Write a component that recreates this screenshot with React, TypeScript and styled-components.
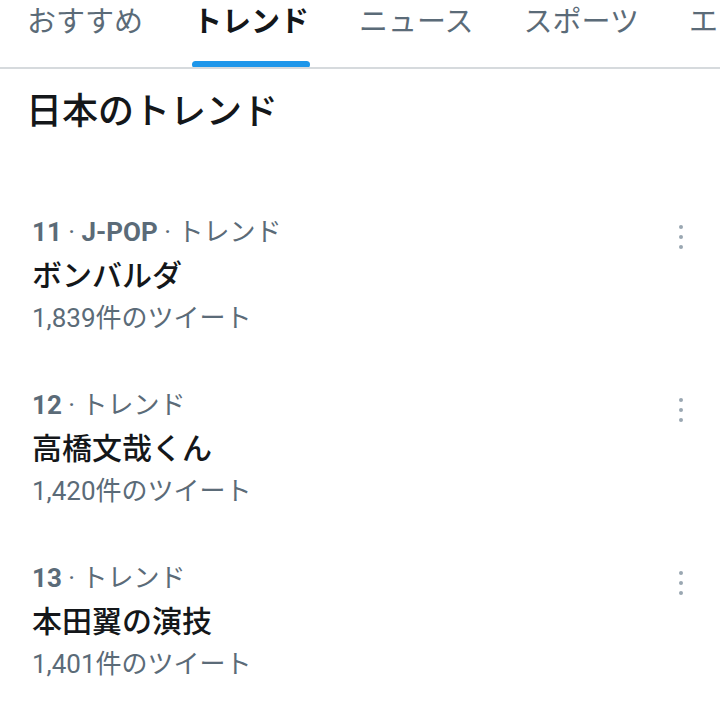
import React from "react";
import styled, { createGlobalStyle } from "styled-components";

interface Trend {
  rank: number;
  category?: string;
  name: string;
  count: string;
}

const tabs = ["おすすめ", "トレンド", "ニュース", "スポーツ", "エンタメ"];

const trends: Trend[] = [
  { rank: 11, category: "J-POP", name: "ボンバルダ", count: "1,839" },
  { rank: 12, name: "高橋文哉くん", count: "1,420" },
  { rank: 13, name: "本田翼の演技", count: "1,401" },
];

const GlobalStyle = createGlobalStyle`
  html, body {
    margin: 0;
    padding: 0;
    background: #fff;
    font-family: Roboto, "Noto Sans CJK JP", sans-serif;
  }
`;

const Page = styled.div`
  width: 720px;
  height: 709px;
  overflow: hidden;
  background: #fff;
`;

const TabBar = styled.nav`
  display: flex;
  padding-left: 2px;
  border-bottom: 2px solid #d6dadd;
  white-space: nowrap;
  overflow: hidden;
`;

const Tab = styled.div<{ $active?: boolean }>`
  position: relative;
  padding: 0 25px;
  height: 67px;
  font-size: 29px;
  line-height: 44px;
  font-weight: ${(p) => (p.$active ? 700 : 400)};
  color: ${(p) => (p.$active ? "#14171a" : "#5b6b78")};
  flex-shrink: 0;

  &::after {
    content: "";
    display: ${(p) => (p.$active ? "block" : "none")};
    position: absolute;
    left: 24px;
    right: 24px;
    bottom: -1px;
    height: 7px;
    border-radius: 4px;
    background: #1d96ea;
  }
`;

const Heading = styled.h2`
  margin: 0;
  padding: 21px 0 0 26px;
  font-size: 36px;
  line-height: 44px;
  font-weight: 500;
  color: #14171a;
`;

const List = styled.div`
  padding-top: 82px;
  display: flex;
  flex-direction: column;
  gap: 55px;
`;

const Item = styled.div`
  position: relative;
  padding-left: 32px;
  display: flex;
  flex-direction: column;
`;

const Meta = styled.div`
  font-size: 26px;
  line-height: 32px;
  color: #5b6b78;
  white-space: pre;
`;

const Strong = styled.span`
  font-weight: 700;
`;

const Name = styled.div`
  margin-top: 8px;
  font-size: 30px;
  line-height: 40px;
  font-weight: 500;
  color: #14171a;
`;

const Count = styled.div`
  margin-top: 6px;
  font-size: 26px;
  line-height: 32px;
  color: #5b6b78;
`;

const More = styled.div`
  position: absolute;
  right: 37px;
  top: 9px;
  display: flex;
  flex-direction: column;
  gap: 6px;
`;

const Dot = styled.span`
  width: 4px;
  height: 4px;
  border-radius: 50%;
  background: #9aa7b2;
`;

const App: React.FC = () => {
  return (
    <Page>
      <GlobalStyle />
      <TabBar>
        {tabs.map((t) => (
          <Tab key={t} $active={t === "トレンド"}>
            {t}
          </Tab>
        ))}
      </TabBar>
      <Heading>日本のトレンド</Heading>
      <List>
        {trends.map((tr) => (
          <Item key={tr.rank}>
            <Meta>
              <Strong>{tr.rank}</Strong>
              {" · "}
              {tr.category && (
                <>
                  <Strong>{tr.category}</Strong>
                  {" · "}
                </>
              )}
              トレンド
            </Meta>
            <Name>{tr.name}</Name>
            <Count>{tr.count}件のツイート</Count>
            <More>
              <Dot />
              <Dot />
              <Dot />
            </More>
          </Item>
        ))}
      </List>
    </Page>
  );
};

export default App;
